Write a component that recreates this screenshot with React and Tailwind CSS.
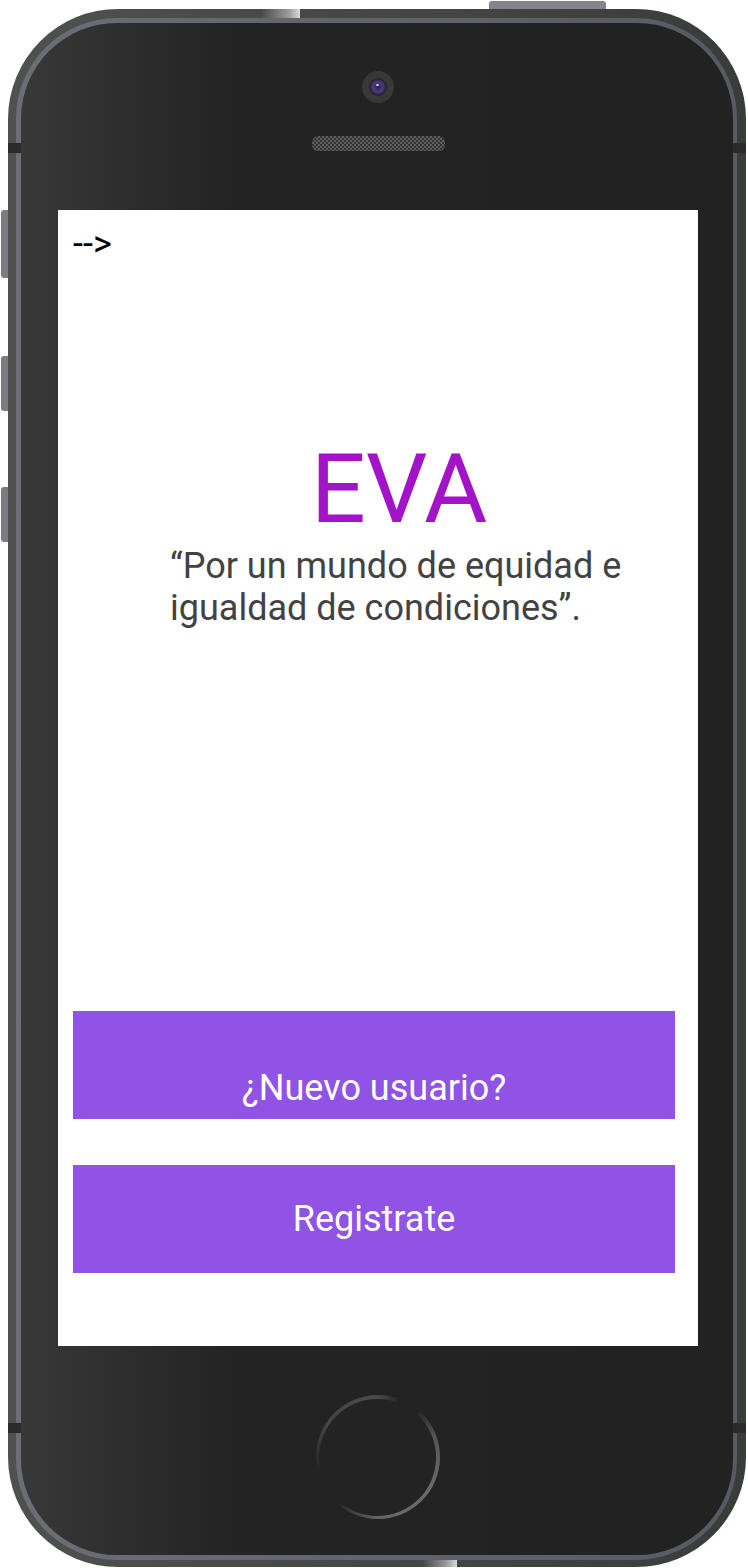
export default function App() {
  return (
    <div className="relative w-[748px] h-[1568px] bg-white overflow-hidden font-[Roboto,sans-serif]">
      {/* hardware buttons behind the frame */}
      <div className="absolute left-[1px] top-[210px] w-[10px] h-[68px] rounded-l-[3px] bg-[#7c7b84]" />
      <div className="absolute left-[1px] top-[356px] w-[10px] h-[55px] rounded-l-[3px] bg-[#7c7b84]" />
      <div className="absolute left-[1px] top-[487px] w-[10px] h-[55px] rounded-l-[3px] bg-[#7c7b84]" />
      <div className="absolute left-[489px] top-[1px] w-[117px] h-[12px] rounded-t-[3px] bg-[#85848c]" />

      {/* phone body */}
      <div className="relative ml-[8px] mt-[9px] w-[738px] h-[1558px] rounded-[110px] bg-linear-to-r from-[#4f514e] to-[#393d39] pt-[9px] pb-[7px] pl-[8px] pr-[9px]">
        <div className="h-full rounded-[101px] bg-linear-to-r from-[#6b6e76] to-[#565a63] pt-[5px] pb-[5px] pl-[5px] pr-[4px]">
          <div className="h-full rounded-[96px] bg-linear-to-r from-[#383838] via-[#232323] via-30% to-[#222222] flex flex-col">
            {/* camera */}
            <div className="self-center ml-[1px] mt-[48px] w-[32px] h-[32px] rounded-full bg-[#383838] flex items-center justify-center">
              <div className="relative w-[18px] h-[18px] rounded-full bg-[radial-gradient(circle,#2a1f4a_0%,#4c3c84_40%,#2b2540_60%,#1a1a1f_80%)]">
                <div className="absolute left-[7px] top-[6px] w-[3px] h-[2px] rounded-full bg-[#c9c3dc]" />
              </div>
            </div>
            {/* speaker */}
            <div className="self-center ml-[2px] mt-[33px] w-[133px] h-[15px] rounded-[6px] bg-[image:repeating-conic-gradient(#5e5e5e_0%_25%,#343434_0%_50%)] bg-[length:4px_4px]" />

            {/* screen */}
            <div className="ml-[37px] mt-[59px] w-[640px] h-[1136px] bg-white flex flex-col">
              <div className="pl-[15px] pt-[13px] text-[36px] leading-[42px] text-black">--&gt;</div>

              <div className="ml-[112px] mt-[176px] w-[458px]">
                <div className="text-center text-[97px] leading-[96px] text-[#a313c8]">EVA</div>
                <p className="mt-[8px] text-[36px] leading-[42px] text-[#424242]">
                  “Por un mundo de equidad e igualdad de condiciones”.
                </p>
              </div>

              <div className="mt-auto mb-[73px] ml-[15px] w-[602px] flex flex-col gap-[46px]">
                <button className="h-[108px] bg-[#9152e6] text-white text-[36px] leading-[42px] flex items-end justify-center pb-[10px]">
                  ¿Nuevo usuario?
                </button>
                <button className="h-[108px] bg-[#9152e6] text-white text-[36px] leading-[42px] flex items-center justify-center">
                  Registrate
                </button>
              </div>
            </div>

            {/* home button */}
            <div className="self-center ml-[1px] mt-[49px] w-[124px] h-[124px] rounded-full bg-[conic-gradient(#4a4a4a_0deg,rgba(74,74,74,0)_22deg,rgba(80,80,80,0)_40deg,#555555_70deg,#6a6a6a_120deg,#666666_180deg,rgba(90,90,90,0)_222deg,rgba(70,70,70,0)_255deg,#444444_300deg,#4a4a4a_360deg)] flex items-center justify-center">
              <div className="w-[117px] h-[117px] rounded-full bg-[#232323]" />
            </div>
          </div>
        </div>
      </div>

      {/* antenna bands and edge highlights */}
      <div className="absolute left-[8px] top-[143px] w-[13px] h-[10px] bg-[#2b2b2b]" />
      <div className="absolute left-[733px] top-[143px] w-[13px] h-[10px] bg-[#2b2b2b]" />
      <div className="absolute left-[8px] top-[1423px] w-[13px] h-[10px] bg-[#2b2b2b]" />
      <div className="absolute left-[733px] top-[1423px] w-[13px] h-[10px] bg-[#2b2b2b]" />
      <div className="absolute left-[262px] top-[9px] w-[38px] h-[9px] bg-linear-to-r from-[#4d4f4c] via-[#9a9a9a] via-70% to-[#dcdcdc]" />
      <div className="absolute left-[422px] top-[1560px] w-[35px] h-[7px] bg-linear-to-r from-[#444644] via-[#9a9a9a] via-70% to-[#dcdcdc]" />
    </div>
  );
}
